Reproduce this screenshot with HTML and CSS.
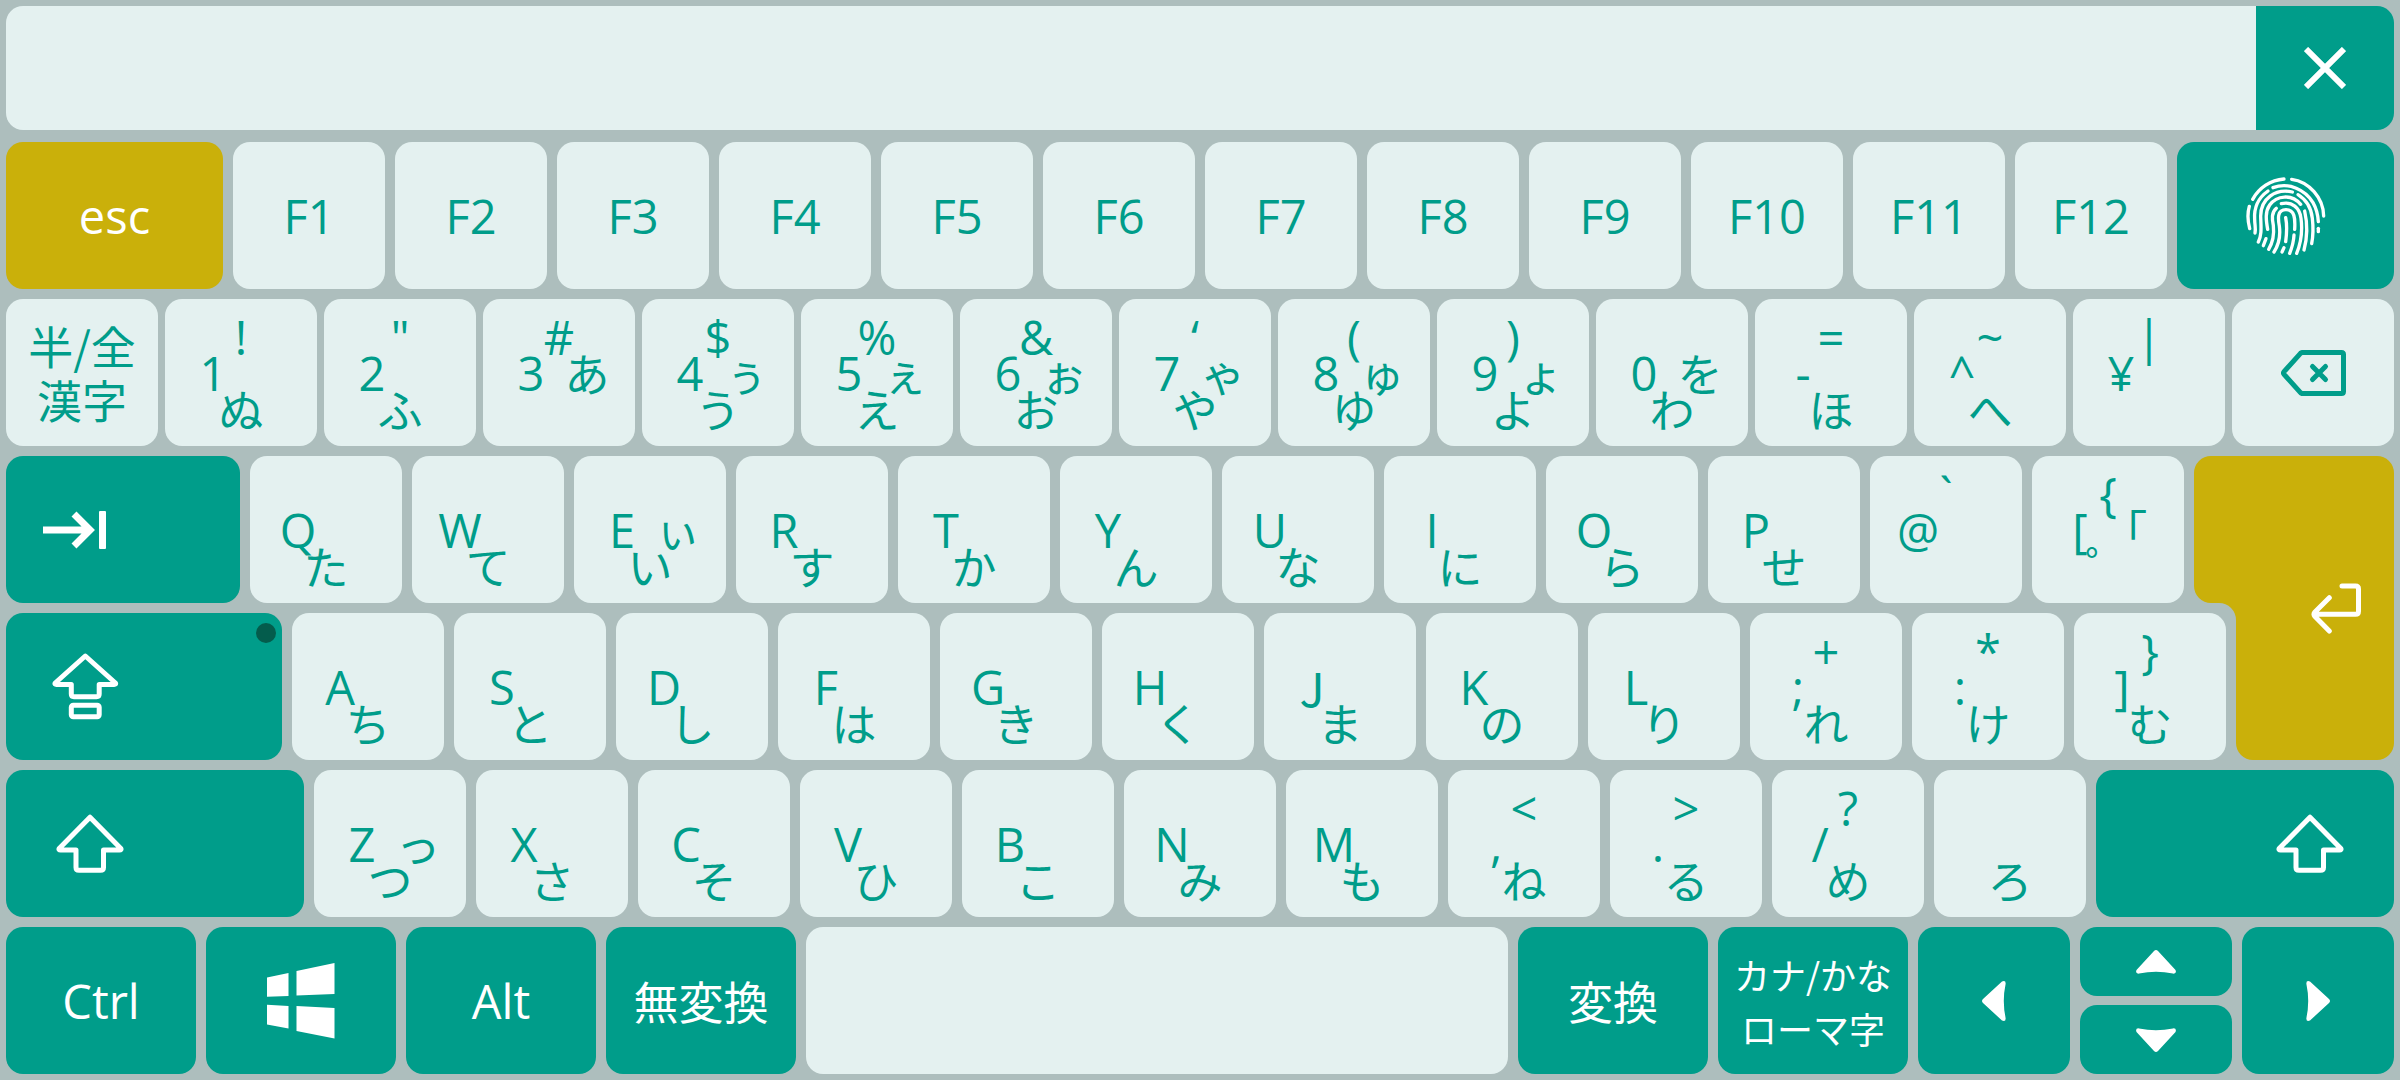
FILE: index.html
```html
<!DOCTYPE html>
<html lang="ja">
<head>
<meta charset="utf-8">
<meta name="viewport" content="width=device-width, initial-scale=1">
<title>キーボード</title>
<link rel="stylesheet" href="styles.css">
</head>
<body>
<svg class="sprite" aria-hidden="true">
  <symbol id="shift" viewBox="0 0 68 59">
    <path d="M34 3.2 3.2 34.5Q2.4 36 4.5 36H20V53.5Q20 56.3 23 56.3H44.500Q47.500 56.300 47.500 53.500V36H63.500Q65.600 36 64.800 34.500Z" fill="none" stroke="currentColor" stroke-width="5" stroke-linejoin="round"/>
  </symbol>
  <symbol id="arrow" viewBox="0 0 40 24">
    <path d="M18 1Q20-1 22 1L39.500 20Q41 24 37 23.600 20 20 3 23.600-1 24 .5 20Z" fill="currentColor"/>
  </symbol>
</svg>

<main class="keyboard">
  <div class="display">
    <input class="display__text" type="text" aria-label="入力">
    <button class="display__close" type="button" aria-label="閉じる">
      <svg width="42" height="42" viewBox="0 0 42 42"><path d="M2 2 40 40M40 2 2 40" fill="none" stroke="currentColor" stroke-width="6"/></svg>
    </button>
  </div>

  <div class="row">
    <button class="key key--accent key--edge" type="button">esc</button>
    <button class="key" type="button">F1</button>
    <button class="key" type="button">F2</button>
    <button class="key" type="button">F3</button>
    <button class="key" type="button">F4</button>
    <button class="key" type="button">F5</button>
    <button class="key" type="button">F6</button>
    <button class="key" type="button">F7</button>
    <button class="key" type="button">F8</button>
    <button class="key" type="button">F9</button>
    <button class="key" type="button">F10</button>
    <button class="key" type="button">F11</button>
    <button class="key" type="button">F12</button>
    <button class="key key--dark key--edge" type="button" aria-label="指紋認証">
      <svg width="80" height="78" viewBox="46 33 240 234">
        <g fill="none" stroke="currentColor" stroke-width="10" stroke-linecap="round">
          <path d="M66 100C85 65 120 42 160 39"/>
          <path d="M183 40C235 47 278 95 279 150"/>
          <path d="M56 121C49 145 51 165 57 188"/>
          <path d="M112 75C78 99 70 132 72 160 72 178 76 185 73 201"/>
          <path d="M127 65C175 47 225 72 247 110 259 131 262 150 263 167"/>
          <path d="M263 187V197"/>
          <path d="M185 78C135 66 89 98 90 152 91 185 94 205 83 228"/>
          <path d="M202 86C228 102 242 128 245 157 248 183 248 207 243 233"/>
          <path d="M210 115C183 83 138 88 117 117 103 137 106 162 111 190"/>
          <path d="M152 113C185 106 207 125 211 157 216 195 211 230 198 262"/>
          <path d="M222 135C230 170 230 215 220 252"/>
          <path d="M137 127C122 140 124 158 128 178 131 205 127 228 114 250"/>
          <path d="M192 190C194 157 192 131 166 131 139 131 142 158 146 180 150 210 145 235 130 258"/>
          <path d="M165 155C170 180 168 205 165 227"/>
          <path d="M190 207C189 228 183 247 177 262"/>
          <path d="M160 245 154 258"/>
          <path d="M106 218 98 239"/>
        </g>
      </svg>
    </button>
  </div>

  <div class="row row--tight">
    <button class="key key--kanji" type="button">半/全<br>漢字</button>
    <button class="key key--legend" type="button"><span class="top">!</span><span class="base">1</span><span class="kana">ぬ</span></button>
    <button class="key key--legend" type="button"><span class="top">"</span><span class="base">2</span><span class="kana">ふ</span></button>
    <button class="key key--legend" type="button"><span class="top">#</span><span class="base">3</span><span class="side">あ</span></button>
    <button class="key key--legend" type="button"><span class="top">$</span><span class="base">4</span><span class="side">ぅ</span><span class="kana">う</span></button>
    <button class="key key--legend" type="button"><span class="top">%</span><span class="base">5</span><span class="side">ぇ</span><span class="kana">え</span></button>
    <button class="key key--legend" type="button"><span class="top">&amp;</span><span class="base">6</span><span class="side">ぉ</span><span class="kana">お</span></button>
    <button class="key key--legend" type="button"><span class="top">‘</span><span class="base">7</span><span class="side">ゃ</span><span class="kana">や</span></button>
    <button class="key key--legend" type="button"><span class="top">(</span><span class="base">8</span><span class="side">ゅ</span><span class="kana">ゆ</span></button>
    <button class="key key--legend" type="button"><span class="top">)</span><span class="base">9</span><span class="side">ょ</span><span class="kana">よ</span></button>
    <button class="key key--legend" type="button"><span class="base">0</span><span class="side">を</span><span class="kana">わ</span></button>
    <button class="key key--legend" type="button"><span class="top">=</span><span class="base">-</span><span class="kana">ほ</span></button>
    <button class="key key--legend" type="button"><span class="top">~</span><span class="base">^</span><span class="kana">へ</span></button>
    <button class="key key--legend" type="button"><span class="top">|</span><span class="base">¥</span></button>
    <button class="key key--backspace" type="button" aria-label="バックスペース">
      <svg width="65" height="46" viewBox="0 0 65 46"><g fill="none" stroke="currentColor" stroke-width="5" stroke-linejoin="round" stroke-linecap="round"><path d="M3 24.300Q2 23 3 21.700L19.500 3.300 21 2.500H60.500Q62.500 2.500 62.500 4.500V41.500Q62.500 43.500 60.500 43.500H21L19.500 42.700Z"/><path d="M31.500 16.500 44.500 29.500M44.500 16.500 31.500 29.500"/></g></svg>
    </button>
  </div>

  <div class="block">
    <div class="row block__upper">
      <button class="key key--dark key--tab" type="button" aria-label="タブ">
        <svg width="63" height="38" viewBox="0 0 63 38"><path d="M0 19H46M31 3 47 19 31 35" fill="none" stroke="currentColor" stroke-width="7"/><rect x="56" width="7" height="38" rx="1" fill="currentColor"/></svg>
      </button>
      <button class="key key--legend" type="button"><span class="base">Q</span><span class="kana">た</span></button>
      <button class="key key--legend" type="button"><span class="base">W</span><span class="kana">て</span></button>
      <button class="key key--legend" type="button"><span class="base">E</span><span class="side">ぃ</span><span class="kana">い</span></button>
      <button class="key key--legend" type="button"><span class="base">R</span><span class="kana">す</span></button>
      <button class="key key--legend" type="button"><span class="base">T</span><span class="kana">か</span></button>
      <button class="key key--legend" type="button"><span class="base">Y</span><span class="kana">ん</span></button>
      <button class="key key--legend" type="button"><span class="base">U</span><span class="kana">な</span></button>
      <button class="key key--legend" type="button"><span class="base">I</span><span class="kana">に</span></button>
      <button class="key key--legend" type="button"><span class="base">O</span><span class="kana">ら</span></button>
      <button class="key key--legend" type="button"><span class="base">P</span><span class="kana">せ</span></button>
      <button class="key key--legend" type="button"><span class="top">`</span><span class="base">@</span></button>
      <button class="key key--legend" type="button"><span class="top">{</span><span class="base">[</span><span class="side">｢</span><span class="kana">゜</span></button>
    </div>
    <div class="row block__lower">
      <button class="key key--dark key--caps" type="button" aria-label="キャップスロック">
        <svg width="67" height="67" viewBox="0 0 67 67"><g fill="none" stroke="currentColor" stroke-width="5" stroke-linejoin="round"><path d="M33.300 3 3.200 30Q2.400 31.400 4.500 31.400H19.300V41Q19.300 43.700 22 43.700H44.500Q47.200 43.700 47.200 41V31.400H62.100Q64.200 31.400 63.400 30Z"/><rect x="19.300" y="52.200" width="27.900" height="11.600" rx="2"/></g></svg>
        <span class="lamp"></span>
      </button>
      <button class="key key--legend" type="button"><span class="base">A</span><span class="kana">ち</span></button>
      <button class="key key--legend" type="button"><span class="base">S</span><span class="kana">と</span></button>
      <button class="key key--legend" type="button"><span class="base">D</span><span class="kana">し</span></button>
      <button class="key key--legend" type="button"><span class="base">F</span><span class="kana">は</span></button>
      <button class="key key--legend" type="button"><span class="base">G</span><span class="kana">き</span></button>
      <button class="key key--legend" type="button"><span class="base">H</span><span class="kana">く</span></button>
      <button class="key key--legend" type="button"><span class="base base--short">J</span><span class="kana">ま</span></button>
      <button class="key key--legend" type="button"><span class="base">K</span><span class="kana">の</span></button>
      <button class="key key--legend" type="button"><span class="base">L</span><span class="kana">り</span></button>
      <button class="key key--legend" type="button"><span class="top">+</span><span class="base">;</span><span class="kana">れ</span></button>
      <button class="key key--legend" type="button"><span class="top">*</span><span class="base">:</span><span class="kana">け</span></button>
      <button class="key key--legend" type="button"><span class="top">}</span><span class="base">]</span><span class="kana">む</span></button>
    </div>
    <button class="enter" type="button" aria-label="エンター">
      <svg class="enter__shape" viewBox="0 0 200 304" preserveAspectRatio="none"><path d="M17 0H183A17 17 0 0 1 200 17V287A17 17 0 0 1 183 304H59A17 17 0 0 1 42 287V164A17 17 0 0 0 25 147H17A17 17 0 0 1 0 130V17A17 17 0 0 1 17 0Z" fill="currentColor"/></svg>
      <svg class="enter__icon" width="50" height="51" viewBox="0 0 50 51"><path d="M31 3H44.500Q47.500 3 47.500 6V28.300Q47.500 31.300 44.500 31.300H3M18.300 14.700 4 29Q2 31.300 4 33.600L18.300 48" fill="none" stroke="currentColor" stroke-width="5" stroke-linecap="round" stroke-linejoin="round"/></svg>
    </button>
  </div>

  <div class="row">
    <button class="key key--dark key--shift" type="button" aria-label="左シフト"><svg width="68" height="59"><use href="#shift"/></svg></button>
    <button class="key key--legend" type="button"><span class="base">Z</span><span class="side">っ</span><span class="kana">つ</span></button>
    <button class="key key--legend" type="button"><span class="base">X</span><span class="kana">さ</span></button>
    <button class="key key--legend" type="button"><span class="base">C</span><span class="kana">そ</span></button>
    <button class="key key--legend" type="button"><span class="base">V</span><span class="kana">ひ</span></button>
    <button class="key key--legend" type="button"><span class="base">B</span><span class="kana">こ</span></button>
    <button class="key key--legend" type="button"><span class="base">N</span><span class="kana">み</span></button>
    <button class="key key--legend" type="button"><span class="base">M</span><span class="kana">も</span></button>
    <button class="key key--legend" type="button"><span class="top">&lt;</span><span class="base">,</span><span class="kana">ね</span></button>
    <button class="key key--legend" type="button"><span class="top">&gt;</span><span class="base">.</span><span class="kana">る</span></button>
    <button class="key key--legend" type="button"><span class="top">?</span><span class="base">/</span><span class="kana">め</span></button>
    <button class="key key--legend" type="button"><span class="kana">ろ</span></button>
    <button class="key key--dark key--shift key--shift-right" type="button" aria-label="右シフト"><svg width="68" height="59"><use href="#shift"/></svg></button>
  </div>

  <div class="row">
    <button class="key key--dark key--mod" type="button">Ctrl</button>
    <button class="key key--dark key--mod" type="button" aria-label="ウィンドウズ">
      <svg width="68" height="76" viewBox="0 0 68 76"><path d="M0 14.500 21.500 10V33L0 33.800ZM29.500 8 67.500 0V31L29.500 32.500ZM0 41.800 21.500 43V65.500L0 61.500ZM29.500 43 67.500 45V75.500L29.500 68Z" fill="currentColor"/></svg>
    </button>
    <button class="key key--dark key--mod" type="button">Alt</button>
    <button class="key key--dark key--mod key--kanji" type="button">無変換</button>
    <button class="key key--space" type="button" aria-label="スペース"></button>
    <button class="key key--dark key--mod key--kanji" type="button">変換</button>
    <button class="key key--dark key--mod key--kanji key--small" type="button">カナ/かな<br>ローマ字</button>
    <button class="key key--dark" type="button" aria-label="左"><svg class="turn-left" width="40" height="24"><use href="#arrow"/></svg></button>
    <div class="stack">
      <button class="key key--dark" type="button" aria-label="上"><svg width="40" height="24"><use href="#arrow"/></svg></button>
      <button class="key key--dark" type="button" aria-label="下"><svg class="turn-down" width="40" height="24"><use href="#arrow"/></svg></button>
    </div>
    <button class="key key--dark" type="button" aria-label="右"><svg class="turn-right" width="40" height="24"><use href="#arrow"/></svg></button>
  </div>
</main>
</body>
</html>
```
FILE: styles.css
```css
:root {
  --board: #adbebd;
  --key: #e4f1f0;
  --green: #009d8a;
  --gold: #cab00a;
  --lamp: #045c4c;
  --radius: 17px;
  --gap: 10px;
  --latin: "Open Sans", "Noto Sans", sans-serif;
  --cjk: "Noto Sans CJK JP", sans-serif;
}

* {
  box-sizing: border-box;
}

body {
  margin: 0;
  background: var(--board);
  font-family: var(--latin);
  font-weight: 400;
}

button,
input {
  margin: 0;
  padding: 0;
  border: 0;
  font: inherit;
  color: inherit;
}

svg {
  display: block;
  flex: none;
}

.sprite {
  position: absolute;
  width: 0;
  height: 0;
}

.keyboard {
  display: flex;
  flex-direction: column;
  gap: var(--gap);
  min-height: 100vh;
  padding: 6px;
}

/* Text display above the keys */
.display {
  display: flex;
  flex: none;
  height: 124px;
  margin-bottom: 2px;
  border-radius: var(--radius);
  overflow: hidden;
}

.display__text {
  flex: 1;
  min-width: 0;
  padding: 0 24px;
  background: var(--key);
  color: var(--green);
  font-size: 47px;
  outline: 0;
}

.display__close {
  display: flex;
  align-items: center;
  justify-content: center;
  width: 138px;
  background: var(--green);
  color: #fff;
}

/* Rows: key widths are shares of the row */
.row {
  display: flex;
  flex: 1 0 147px;
  gap: var(--gap);
}

.row--tight {
  gap: 7px;
}

.key {
  position: relative;
  display: flex;
  flex: 152 1 0;
  align-items: center;
  justify-content: center;
  min-width: 0;
  border-radius: var(--radius);
  background: var(--key);
  color: var(--green);
  font-size: 47px;
  line-height: 54px;
}

.key--dark {
  background: var(--green);
  color: #fff;
}

.key--accent {
  background: var(--gold);
  color: #fff;
}

.key--kanji {
  font-family: var(--cjk);
  font-size: 45px;
}

.key--small {
  font-size: 36px;
}

.key--edge { flex-grow: 217; }
.key--backspace { flex-grow: 162; }
.key--mod { flex-grow: 190; }
.key--space { flex-grow: 702; }

.key--tab {
  flex-grow: 234;
  justify-content: flex-start;
}

.key--tab svg {
  margin-left: 37px;
}

.key--caps {
  flex-grow: 276;
  justify-content: flex-start;
}

.key--caps svg {
  margin-left: 46px;
}

.key--shift {
  flex-grow: 298;
  justify-content: flex-start;
}

.key--shift svg {
  margin: 0 50px;
}

.key--shift-right {
  justify-content: flex-end;
}

.lamp {
  position: absolute;
  top: 10px;
  right: 6px;
  width: 20px;
  height: 20px;
  border-radius: 50%;
  background: var(--lamp);
}

/* Up to four legends in a diamond: top, left, right, bottom */
.key--legend {
  display: grid;
  grid-template-columns: 56px 56px;
  grid-template-rows: 36px 36px 36px;
  align-content: center;
  justify-content: center;
  justify-items: center;
  line-height: 36px;
}

.top { grid-area: 1 / 1 / 2 / 3; }
.base { grid-area: 2 / 1; }
.side { grid-area: 2 / 2; }
.kana { grid-area: 3 / 1 / 4 / 3; }

.base--short {
  font-family: var(--cjk);
}

.side,
.kana {
  font-family: var(--cjk);
  font-size: 45px;
}

/* Two rows that share the L-shaped enter key */
.block {
  display: grid;
  flex: 2 0 304px;
  grid-template-columns: minmax(0, 2188fr) minmax(0, 42fr) minmax(0, 158fr);
  grid-template-rows: 1fr 1fr;
  row-gap: var(--gap);
}

.block__upper {
  grid-area: 1 / 1;
  padding-right: var(--gap);
}

.block__lower {
  grid-area: 2 / 1 / 3 / 3;
  z-index: 1;
  padding-right: var(--gap);
}

.enter {
  position: relative;
  display: flex;
  grid-area: 1 / 2 / 3 / 4;
  align-items: center;
  justify-content: flex-end;
  padding-right: 33px;
  background: none;
  color: #fff;
}

.enter__shape {
  position: absolute;
  inset: 0;
  width: 100%;
  height: 100%;
  color: var(--gold);
}

.enter__icon {
  position: relative;
}

/* Arrow keys */
.stack {
  display: flex;
  flex: 152 1 0;
  flex-direction: column;
  gap: 9px;
  min-width: 0;
}

.stack .key {
  flex: 1 1 0;
}

.turn-left { transform: rotate(-90deg); }
.turn-right { transform: rotate(90deg); }
.turn-down { transform: rotate(180deg); }
```
